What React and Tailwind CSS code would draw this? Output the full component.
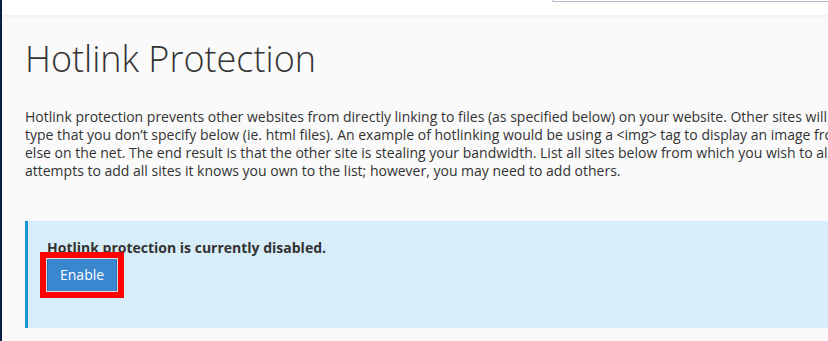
export default function App() {
  return (
    <div className="flex min-h-[341px] w-full overflow-hidden bg-[#fafafa] font-['Open_Sans',sans-serif] text-[#333]">
      <div className="w-[2px] shrink-0 bg-[#0b1e45]" />
      <div className="flex min-w-0 flex-1 flex-col overflow-hidden">
        <div className="relative z-10 flex h-[15px] bg-white shadow-[0_1px_4px_rgba(0,0,0,0.07)]">
          <div className="ml-auto h-[2px] w-[276px] rounded-bl-[3px] border-b border-l border-[#b3bbcb]" />
        </div>
        <div className="pl-[23px]">
          <h1 className="mt-[24px] whitespace-nowrap text-[36px] font-light leading-[40px] text-[#333]">
            Hotlink Protection
          </h1>
          <p className="mt-[29px] w-[1000px] text-[14px] leading-[18px] text-[#333]">
            Hotlink protection prevents other websites from directly linking to files (as specified below) on your website. Other sites will still be able to link to any file type that you don’t specify below (ie. html files). An example of hotlinking would be using a &lt;img&gt; tag to display an image from your site from somewhere else on the net. The end result is that the other site is stealing your bandwidth. List all sites below from which you wish to allow direct links. This system attempts to add all sites it knows you own to the list; however, you may need to add others.
          </p>
          <div className="mt-[41px] border-l-[3px] border-[#1a96d4] bg-[#d7edf9] pb-[36px] pl-[19px] pt-[17px]">
            <div className="text-[14px] font-bold leading-[20px] text-[#333]">
              Hotlink protection is currently disabled.
            </div>
            <div className="relative inline-block">
              <button className="rounded-[2px] border border-[#2d6db0] bg-[#3a87cf] px-[12px] py-[6px] text-[14px] leading-[20px] text-white">
                Enable
              </button>
              <span className="pointer-events-none absolute -bottom-[6px] -left-[7px] -right-[7px] -top-[6px] border-[6px] border-[#ff0000] shadow-[inset_0_0_0_1px_#dcdcdc]" />
            </div>
          </div>
        </div>
      </div>
    </div>
  );
}
